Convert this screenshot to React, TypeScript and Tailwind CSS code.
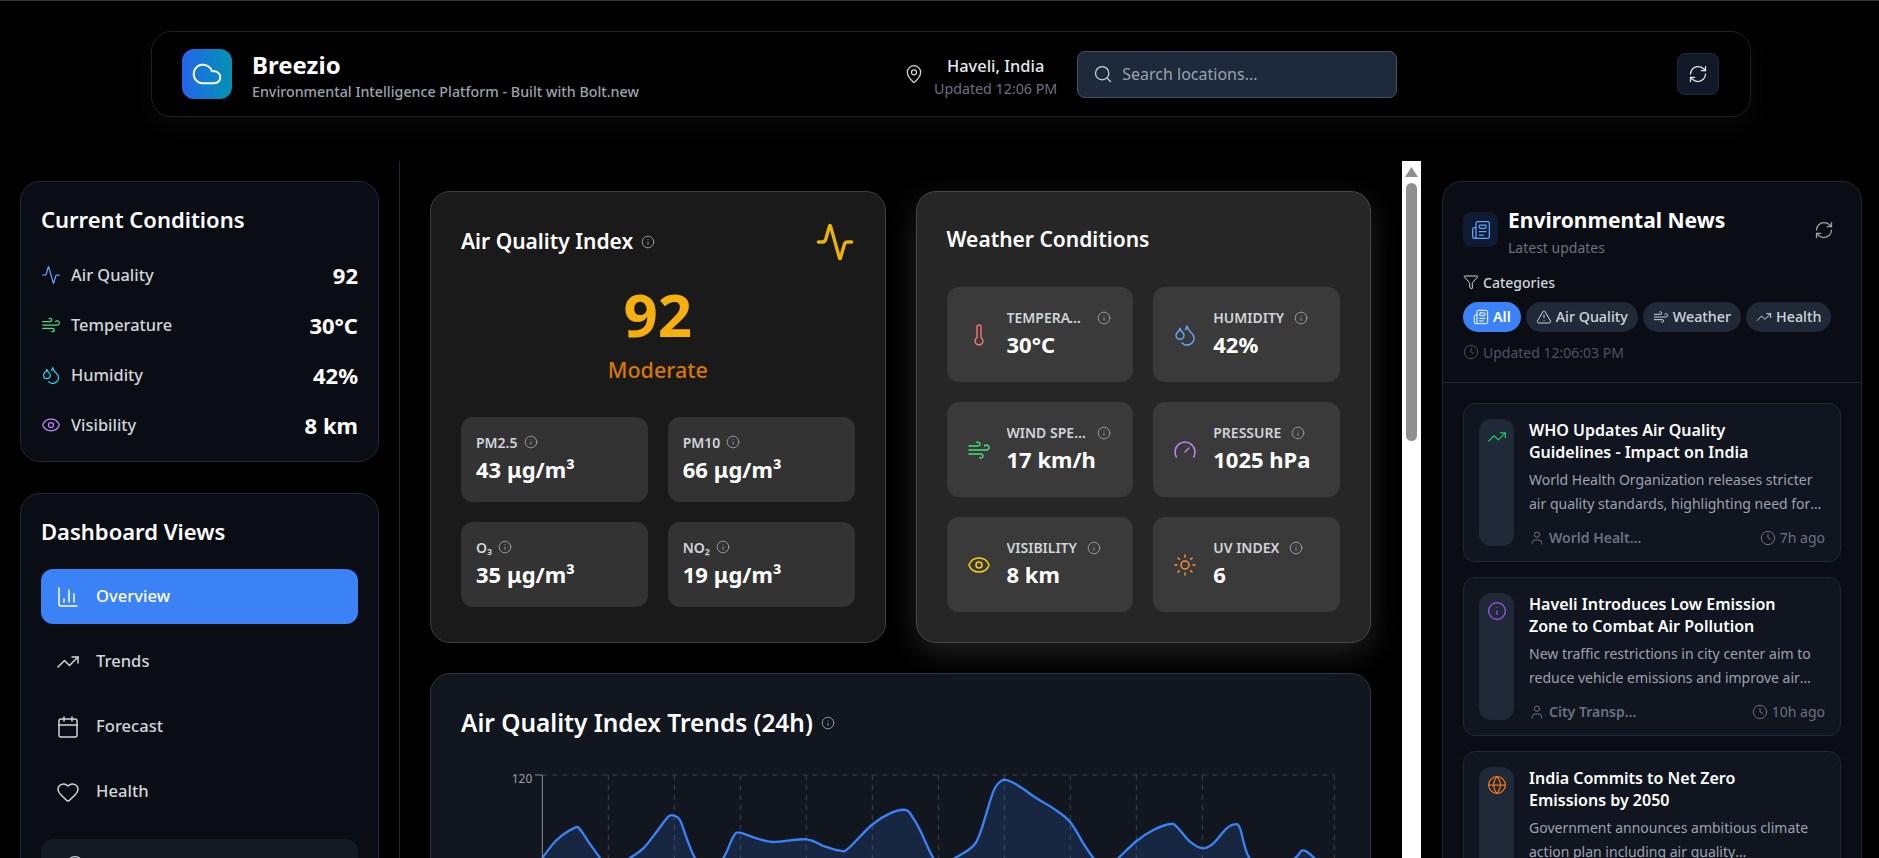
import {
  Activity, Calendar, ChartColumn, Clock, Cloud, Droplets, Eye, Filter, Gauge, Globe, Heart, Info, MapPin,
  Newspaper, RefreshCw, Search, Sun, Thermometer, TrendingUp, TriangleAlert, User, Wind,
} from "lucide-react";
import type { ReactNode } from "react";

const pts: [number, number][] = [
  [127, 294], [170, 240], [225, 203], [240, 208], [265, 245], [300, 294], [330, 340], [390, 294], [430, 265], [470, 215],
  [505, 170], [522, 167], [540, 180], [560, 235], [585, 294], [625, 340], [670, 294], [700, 230], [718, 218], [770, 235],
  [820, 246], [920, 238], [970, 258], [1020, 272], [1045, 265], [1115, 195], [1170, 160], [1218, 150], [1240, 175], [1260, 210], [1300, 294],
  [1330, 320], [1365, 294], [1415, 262], [1440, 220], [1480, 95], [1505, 62], [1525, 62], [1560, 80], [1610, 115], [1660, 145],
  [1710, 185], [1750, 250], [1780, 294], [1815, 330], [1855, 294], [1910, 243], [1960, 210], [2010, 192], [2030, 200], [2070, 245],
  [2108, 265], [2140, 250], [2180, 205], [2205, 193], [2220, 205], [2248, 294], [2310, 340], [2385, 294], [2405, 272], [2425, 278], [2460, 310], [2503, 340],
];

function smooth(p: [number, number][]) {
  let d = `M${p[0][0]} ${p[0][1]}`;
  for (let i = 0; i < p.length - 1; i++) {
    const a = p[Math.max(i - 1, 0)], b = p[i], c = p[i + 1], e = p[Math.min(i + 2, p.length - 1)];
    d += ` C${b[0] + (c[0] - a[0]) / 6} ${b[1] + (c[1] - a[1]) / 6} ${c[0] - (e[0] - b[0]) / 6} ${c[1] - (e[1] - b[1]) / 6} ${c[0]} ${c[1]}`;
  }
  return d;
}

const curve = smooth(pts);
const gridX = [325, 523, 721, 919, 1117, 1315, 1513, 1711, 1909, 2107, 2503];

function I() {
  return <Info size={14} strokeWidth={1.5} className="shrink-0 text-[#9ca3af]" />;
}

function SideRow({ icon, label, value }: { icon: ReactNode; label: string; value: string }) {
  return (
    <div className="flex h-[30px] items-center justify-between">
      <div className="flex items-center gap-[10px]">
        {icon}
        <span className="text-[16.4px] font-medium text-[#d1d5db]">{label}</span>
      </div>
      <span className="text-[22px] font-bold text-white">{value}</span>
    </div>
  );
}

function NavItem({ icon, label, active }: { icon: ReactNode; label: string; active?: boolean }) {
  return (
    <div className={active ? "flex h-[55px] items-center gap-4 rounded-xl bg-[#3b82f6] pl-[15px] text-white" : "flex h-[55px] items-center gap-4 rounded-xl pl-[15px] text-[#d1d5db]"}>
      {icon}
      <span className="text-[16.6px] font-medium">{label}</span>
    </div>
  );
}

function Pollutant({ label, value }: { label: ReactNode; value: string }) {
  return (
    <div className="h-[85px] rounded-xl bg-[#333333] p-[15px]">
      <div className="flex h-5 items-center gap-[6px] text-[14px] font-semibold text-[#d1d5db]">
        <span>{label}</span>
        <I />
      </div>
      <div className="mt-[2px] text-[22px] font-bold leading-[30px] text-white">{value}</div>
    </div>
  );
}

function WeatherTile({ icon, label, value }: { icon: ReactNode; label: string; value: string }) {
  return (
    <div className="flex h-[95px] items-center gap-4 rounded-xl bg-[#3a3a3a] pl-5">
      {icon}
      <div className="min-w-0 pb-[3px]">
        <div className="flex h-5 items-center gap-[10px] text-[14px] font-semibold uppercase text-[#d1d5db]">
          <span className="max-w-[80px] truncate">{label}</span>
          <I />
        </div>
        <div className="mt-[1px] text-[22px] font-bold leading-[30px] text-white">{value}</div>
      </div>
    </div>
  );
}

function Pill({ icon, label, active }: { icon: ReactNode; label: string; active?: boolean }) {
  return (
    <div className={active ? "flex h-[30px] items-center gap-[4px] rounded-full bg-[#3b82f6] px-[10px] text-[14.3px] font-semibold text-white" : "flex h-[30px] items-center gap-[4px] rounded-full bg-[#1f2937] px-[10px] text-[14.3px] font-medium text-[#d1d5db]"}>
      {icon}
      <span>{label}</span>
    </div>
  );
}

function NewsCard({ icon, title, desc, author, time }: { icon: ReactNode; title: ReactNode; desc: string; author: string; time: string }) {
  return (
    <div className="flex h-[159px] shrink-0 gap-[15px] rounded-xl border border-[#1f2937] bg-[#10151f] p-[15px]">
      <div className="flex w-[35px] shrink-0 justify-center rounded-xl bg-[#1f2937] pt-2">{icon}</div>
      <div className="min-w-0 flex-1">
        <div className="text-[16px] font-semibold leading-[22px] text-white">{title}</div>
        <p className="mt-[5px] line-clamp-2 text-[14px] leading-[24px] text-[#9ca3af]">{desc}</p>
        <div className="mt-[11px] flex items-center justify-between text-[14px]">
          <div className="flex items-center gap-[4px] font-semibold text-[#6b7280]">
            <User size={16} strokeWidth={1.5} />
            <span className="max-w-[94px] truncate">{author}</span>
          </div>
          <div className="flex items-center gap-[4px] text-[#6b7280]">
            <Clock size={16} strokeWidth={1.5} />
            <span>{time}</span>
          </div>
        </div>
      </div>
    </div>
  );
}

export default function App() {
  return (
    <div className="h-[858px] overflow-hidden border-t border-[#333333] bg-black font-['Noto_Sans',sans-serif] text-white">
      <div className="flex pl-[151px] pt-[30px]">
        <header className="flex h-[86px] w-[1600px] items-center rounded-[20px] border border-[#1f1f1f] bg-black pl-[30px] pr-[31px] shadow-[0_10px_30px_rgba(255,255,255,0.04)]">
          <div className="flex w-[722px] items-center gap-5">
            <div className="flex h-[50px] w-[50px] items-center justify-center rounded-xl bg-gradient-to-r from-[#2563eb] to-[#0891b2]">
              <Cloud size={32} strokeWidth={1.5} className="text-white" />
            </div>
            <div className="pt-[2px]">
              <div className="text-[24px] font-bold leading-[32px] text-white">Breezio</div>
              <div className="mt-[1px] text-[14.25px] font-medium leading-[20px] text-[#9ca3af]">Environmental Intelligence Platform - Built with Bolt.new</div>
            </div>
          </div>
          <div className="flex items-center gap-5">
            <div className="flex items-center gap-[10px]">
              <MapPin size={20} strokeWidth={1.5} className="text-[#d1d5db]" />
              <div className="pt-[3px] text-center">
                <div className="text-[16.4px] font-medium leading-[26px] text-[#e5e7eb]">Haveli, India</div>
                <div className="text-[14.25px] leading-[20px] text-[#6b7280]">Updated 12:06 PM</div>
              </div>
            </div>
            <div className="flex h-[47px] w-[320px] items-center gap-[9px] rounded-lg border border-[#475569] bg-[#1e293b] pl-[15px]">
              <Search size={20} strokeWidth={1.5} className="text-[#d1d5db]" />
              <span className="text-[16px] text-[#9ca3af]">Search locations...</span>
            </div>
          </div>
          <div className="ml-auto flex h-[42px] w-[42px] items-center justify-center rounded-lg border border-[#1f2937] bg-[#111827]">
            <RefreshCw size={20} strokeWidth={1.5} className="text-[#e5e7eb]" />
          </div>
        </header>
      </div>

      <div className="mt-[44px] flex h-[697px] overflow-hidden">
        <aside className="w-[400px] shrink-0 border-r border-[#1f2937] pl-5 pr-[20px] pt-5">
          <section className="rounded-[20px] border border-[#1f2937] bg-[#0a0d14] px-5 pb-[21px] pt-5">
            <h2 className="mb-[24px] text-[22px] font-semibold leading-[34px] text-white">Current Conditions</h2>
            <div className="flex flex-col gap-5">
              <SideRow icon={<Activity size={20} strokeWidth={1.5} className="text-[#60a5fa]" />} label="Air Quality" value="92" />
              <SideRow icon={<Wind size={20} strokeWidth={1.5} className="text-[#4ade80]" />} label="Temperature" value="30°C" />
              <SideRow icon={<Droplets size={20} strokeWidth={1.5} className="text-[#22d3ee]" />} label="Humidity" value="42%" />
              <SideRow icon={<Eye size={20} strokeWidth={1.5} className="text-[#c084fc]" />} label="Visibility" value="8 km" />
            </div>
          </section>
          <section className="mt-[31px] rounded-[20px] border border-[#1f2937] bg-[#0a0d14] p-5">
            <h2 className="mb-[21px] text-[22px] font-semibold leading-[34px] text-white">Dashboard Views</h2>
            <div className="flex flex-col gap-[10px]">
              <NavItem active icon={<ChartColumn size={24} strokeWidth={1.5} />} label="Overview" />
              <NavItem icon={<TrendingUp size={24} strokeWidth={1.5} />} label="Trends" />
              <NavItem icon={<Calendar size={24} strokeWidth={1.5} />} label="Forecast" />
              <NavItem icon={<Heart size={24} strokeWidth={1.5} />} label="Health" />
            </div>
            <div className="mt-5 h-[120px] rounded-xl bg-[#141a24] pl-[24px] pt-[16px]">
              <Info size={20} strokeWidth={1.5} className="text-[#d1d5db]" />
            </div>
          </section>
        </aside>

        <main className="flex w-[1002px] shrink-0 flex-col gap-[30px] overflow-hidden pb-0 pl-[30px] pr-[31px] pt-[30px]">
          <div className="grid shrink-0 grid-cols-2 gap-[30px]">
            <section className="rounded-[20px] border border-[#3f3f3f] bg-[#1a1a1a] p-[30px]">
              <div className="flex h-[40px] items-center justify-between">
                <div className="flex items-center gap-2">
                  <h2 className="text-[21px] font-semibold text-white">Air Quality Index</h2>
                  <I />
                </div>
                <Activity size={40} strokeWidth={2} className="text-[#eab308]" />
              </div>
              <div className="mt-[14px] text-center text-[60px] font-bold leading-[76px] text-[#f5b00f]">92</div>
              <div className="mt-[3px] text-center text-[21.5px] font-medium leading-[30px] text-[#d97706]">Moderate</div>
              <div className="mt-[32px] grid grid-cols-2 gap-5">
                <Pollutant label="PM2.5" value="43 μg/m³" />
                <Pollutant label="PM10" value="66 μg/m³" />
                <Pollutant label="O₃" value="35 μg/m³" />
                <Pollutant label="NO₂" value="19 μg/m³" />
              </div>
            </section>
            <section className="rounded-[20px] border border-[#474747] bg-[#262626] p-[30px] shadow-[0_10px_30px_rgba(255,255,255,0.13)]">
              <h2 className="mb-[29px] flex h-[36px] items-center text-[21px] font-semibold text-white">Weather Conditions</h2>
              <div className="grid grid-cols-2 gap-5">
                <WeatherTile icon={<Thermometer size={24} strokeWidth={1.5} className="shrink-0 text-[#f87171]" />} label="Temperature" value="30°C" />
                <WeatherTile icon={<Droplets size={24} strokeWidth={1.5} className="shrink-0 text-[#60a5fa]" />} label="Humidity" value="42%" />
                <WeatherTile icon={<Wind size={24} strokeWidth={1.5} className="shrink-0 text-[#4ade80]" />} label="Wind Speed" value="17 km/h" />
                <WeatherTile icon={<Gauge size={24} strokeWidth={1.5} className="shrink-0 text-[#c084fc]" />} label="Pressure" value="1025 hPa" />
                <WeatherTile icon={<Eye size={24} strokeWidth={1.5} className="shrink-0 text-[#facc15]" />} label="Visibility" value="8 km" />
                <WeatherTile icon={<Sun size={24} strokeWidth={1.5} className="shrink-0 text-[#fb923c]" />} label="UV Index" value="6" />
              </div>
            </section>
          </div>
          <section className="shrink-0 rounded-[20px] border border-[#2d3543] bg-[#11161f] p-[30px]">
            <div className="flex h-[38px] items-center gap-2">
              <h2 className="text-[24.4px] font-semibold text-white">Air Quality Index Trends (24h)</h2>
              <I />
            </div>
            <svg width="879" height="300" className="mt-[18px] block" aria-label="AQI chart">
              <g transform="translate(39 0) scale(0.33333)">
                {gridX.map((x) => (
                  <line key={x} x1={x} x2={x} y1={45} y2={900} stroke="#3b4250" strokeWidth={3} strokeDasharray="15 15" />
                ))}
                <line x1={127} x2={2503} y1={45} y2={45} stroke="#3b4250" strokeWidth={3} strokeDasharray="15 15" />
                <path d={`${curve} L2503 900 L127 900 Z`} fill="#3b82f6" fillOpacity={0.16} />
                <path d={curve} fill="none" stroke="#3b82f6" strokeWidth={7} />
                <line x1={127} x2={127} y1={45} y2={900} stroke="#8b8f98" strokeWidth={3} />
                <line x1={105} x2={127} y1={45} y2={45} stroke="#8b8f98" strokeWidth={3} />
                <text x={97} y={69} textAnchor="end" fontSize={36} fill="#9ca3af">120</text>
              </g>
            </svg>
          </section>
        </main>

        <div className="flex w-[19px] shrink-0 flex-col items-center bg-white pt-[6px]">
          <svg width="13" height="10" viewBox="0 0 13 10"><path d="M6.5 0 L13 10 L0 10 Z" fill="#8f8f8f" /></svg>
          <div className="mt-[6px] h-[258px] w-[11px] rounded-full bg-[#8f8f8f]" />
        </div>

        <aside className="w-[458px] shrink-0 pl-[21px] pr-[17px] pt-5">
          <section className="h-[800px] rounded-[20px] border border-[#1f2937] bg-[#0a0d14]">
            <div className="h-[201px] border-b border-[#1f2937] px-5 pt-[20px]">
              <div className="flex items-start">
                <div className="mt-[10px] flex h-[35px] w-[35px] items-center justify-center rounded-lg bg-[#0f1a33]">
                  <Newspaper size={20} strokeWidth={1.5} className="text-[#60a5fa]" />
                </div>
                <div className="ml-[10px] flex-1">
                  <div className="text-[21px] font-bold leading-[36px] text-white">Environmental News</div>
                  <div className="text-[14px] leading-[20px] text-[#6b7280]">Latest updates</div>
                </div>
                <RefreshCw size={20} strokeWidth={1.5} className="mr-[7px] mt-[18px] text-[#9ca3af]" />
              </div>
              <div className="mt-[14px] flex h-5 items-center gap-[4px] text-[14px] font-medium text-[#d1d5db]">
                <Filter size={16} strokeWidth={1.5} />
                <span>Categories</span>
              </div>
              <div className="mt-[10px] flex gap-[5px]">
                <Pill active icon={<Newspaper size={16} strokeWidth={1.5} />} label="All" />
                <Pill icon={<TriangleAlert size={16} strokeWidth={1.5} />} label="Air Quality" />
                <Pill icon={<Wind size={16} strokeWidth={1.5} />} label="Weather" />
                <Pill icon={<TrendingUp size={16} strokeWidth={1.5} />} label="Health" />
              </div>
              <div className="mt-[10px] flex h-5 items-center gap-[4px] text-[14px] text-[#4b5563]">
                <Clock size={16} strokeWidth={1.5} />
                <span>Updated 12:06:03 PM</span>
              </div>
            </div>
            <div className="flex flex-col gap-[15px] px-5 pt-5">
              <NewsCard
                icon={<TrendingUp size={20} strokeWidth={1.5} className="text-[#22c55e]" />}
                title={<>WHO Updates Air Quality<br />Guidelines - Impact on India</>}
                desc="World Health Organization releases stricter air quality standards, highlighting need for stronger national action across states"
                author="World Health Organization"
                time="7h ago"
              />
              <NewsCard
                icon={<Info size={20} strokeWidth={1.5} className="text-[#a855f7]" />}
                title={<>Haveli Introduces Low Emission<br />Zone to Combat Air Pollution</>}
                desc="New traffic restrictions in city center aim to reduce vehicle emissions and improve air quality for residents living nearby"
                author="City Transport Authority"
                time="10h ago"
              />
              <NewsCard
                icon={<Globe size={20} strokeWidth={1.5} className="text-[#f97316]" />}
                title={<>India Commits to Net Zero<br />Emissions by 2050</>}
                desc="Government announces ambitious climate action plan including air quality improvements across major cities nationwide"
                author="Environment Ministry"
                time="12h ago"
              />
            </div>
          </section>
        </aside>
      </div>
    </div>
  );
}
